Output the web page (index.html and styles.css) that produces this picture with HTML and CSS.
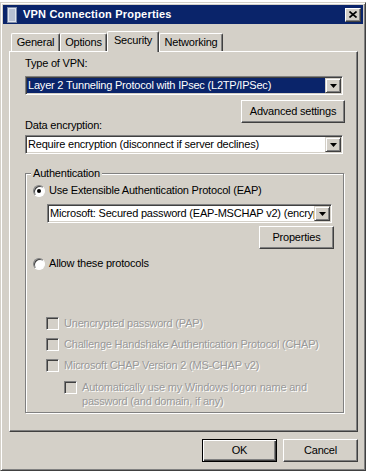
FILE: index.html
```html
<!DOCTYPE html>
<html lang="en">
<head>
  <meta charset="UTF-8">
  <title>VPN Connection Properties</title>
  <link rel="stylesheet" href="styles.css">
</head>
<body>
  <div class="window">
    <div class="titlebar">
      <svg class="title-icon" width="10" height="16" viewBox="0 0 10 16">
        <rect x="0.5" y="0.5" width="9" height="15" fill="#dfe4ee" stroke="#7c8aa8"/>
        <path d="M2 3h6M2 5h6M2 7h6M2 9h6M2 11h6M2 13h6" stroke="#8e9bb6" stroke-width="1"/>
      </svg>
      <span class="title-text">VPN Connection Properties</span>
      <button class="close-btn">
        <svg width="8" height="7" viewBox="0 0 8 7">
          <path d="M0.5 0.5L7.5 6.5M7.5 0.5L0.5 6.5" stroke="#000" stroke-width="1.6"/>
        </svg>
      </button>
    </div>

    <div class="client">
      <div class="tabs">
        <div class="tab tab-general">General</div>
        <div class="tab tab-options">Options</div>
        <div class="tab tab-security active">Security</div>
        <div class="tab tab-networking">Networking</div>
      </div>

      <div class="panel">
        <div class="label">Type of VPN:</div>
        <div class="combo">
          <span class="combo-value selected">Layer 2 Tunneling Protocol with IPsec (L2TP/IPSec)</span>
          <span class="combo-arrow"><svg width="7" height="4" viewBox="0 0 7 4"><polygon points="0,0 7,0 3.5,4" fill="#000"/></svg></span>
        </div>
        <div class="btn-row btn-row-wide">
          <button class="btn btn-advanced">Advanced settings</button>
        </div>

        <div class="label label-enc">Data encryption:</div>
        <div class="combo combo-enc">
          <span class="combo-value">Require encryption (disconnect if server declines)</span>
          <span class="combo-arrow"><svg width="7" height="4" viewBox="0 0 7 4"><polygon points="0,0 7,0 3.5,4" fill="#000"/></svg></span>
        </div>

        <fieldset class="group">
          <legend>Authentication</legend>
          <div class="option">
            <span class="radio checked"></span>
            <span>Use Extensible Authentication Protocol (EAP)</span>
          </div>
          <div class="combo combo-eap">
            <span class="combo-value">Microsoft: Secured password (EAP-MSCHAP v2) (encryption enabled)</span>
            <span class="combo-arrow"><svg width="7" height="4" viewBox="0 0 7 4"><polygon points="0,0 7,0 3.5,4" fill="#000"/></svg></span>
          </div>
          <div class="btn-row btn-row-props">
            <button class="btn">Properties</button>
          </div>
          <div class="option option-allow">
            <span class="radio"></span>
            <span>Allow these protocols</span>
          </div>

          <div class="protocols">
            <div class="check-row"><span class="check"></span><span>Unencrypted password (PAP)</span></div>
            <div class="check-row"><span class="check"></span><span>Challenge Handshake Authentication Protocol (CHAP)</span></div>
            <div class="check-row"><span class="check"></span><span>Microsoft CHAP Version 2 (MS-CHAP v2)</span></div>
            <div class="check-row check-sub"><span class="check"></span><span>Automatically use my Windows logon name and<br>password (and domain, if any)</span></div>
          </div>
        </fieldset>
      </div>

      <div class="dialog-buttons">
        <button class="btn btn-default">OK</button>
        <button class="btn">Cancel</button>
      </div>
    </div>
  </div>
</body>
</html>
```

FILE: styles.css
```css
html, body {
  margin: 0;
  padding: 0;
  background: #fff;
  font-family: 'Liberation Sans', Arial, sans-serif;
  font-size: 11px;
  line-height: 13px;
  letter-spacing: -0.2px;
  color: #000;
}
.window {
  box-sizing: border-box;
  width: 366px;
  height: 469px;
  margin-top: 2px;
  padding: 2px;
  border: 1px solid;
  border-color: #d4d0c8 #404040 #404040 #d4d0c8;
  box-shadow: inset 1px 1px #fff, inset -1px -1px #808080;
  background: #d4d0c8;
  display: flex;
  flex-direction: column;
}
.titlebar {
  flex: none;
  height: 19px;
  display: flex;
  align-items: center;
  padding: 0 2px 0 4px;
  background: #0a246a;
  color: #fff;
  font-weight: bold;
  letter-spacing: 0.2px;
}
.title-icon {
  flex: none;
  margin-right: 6px;
}
.title-text {
  flex: 1;
}
.close-btn {
  box-sizing: border-box;
  width: 16px;
  height: 14px;
  padding: 0;
  display: flex;
  align-items: center;
  justify-content: center;
  background: #d4d0c8;
  border: 1px solid;
  border-color: #fff #404040 #404040 #fff;
  box-shadow: inset -1px -1px #808080;
}
.client {
  flex: 1;
  display: flex;
  flex-direction: column;
  padding: 7px 5px 6px 6px;
}
.tabs {
  display: flex;
  align-items: flex-end;
  padding-left: 2px;
  margin-bottom: -1px;
}
.tab {
  box-sizing: border-box;
  height: 19px;
  padding-top: 2px;
  text-align: center;
  background: #d4d0c8;
  border: 1px solid;
  border-bottom: none;
  border-color: #fff #404040 #404040 #fff;
  box-shadow: inset -1px 0 #808080;
  border-radius: 2px 2px 0 0;
}
.tab.active {
  height: 21px;
  position: relative;
  z-index: 1;
}
.tab-general { width: 49px; }
.tab-options { width: 47px; }
.tab-security { width: 52px; }
.tab-networking { width: 64px; }
.panel {
  flex: 1;
  box-sizing: border-box;
  display: flex;
  flex-direction: column;
  padding: 5px 14px 0 15px;
  border: 1px solid;
  border-color: #fff #404040 #404040 #fff;
  box-shadow: inset -1px -1px #808080;
}
.label-enc {
  margin-top: -4px;
}
.combo {
  box-sizing: border-box;
  height: 19px;
  margin-top: 6px;
  padding: 1px;
  display: flex;
  background: #fff;
  border: 1px solid;
  border-color: #808080 #fff #fff #808080;
  box-shadow: inset 1px 1px #404040, inset -1px -1px #d4d0c8;
}
.combo-enc {
  margin-top: 3px;
}
.combo-value {
  flex: 1;
  min-width: 0;
  padding-left: 1px;
  line-height: 15px;
  white-space: nowrap;
  overflow: hidden;
}
.combo-value.selected {
  background: #0a246a;
  color: #fff;
}
.combo-arrow {
  flex: none;
  box-sizing: border-box;
  width: 16px;
  height: 15px;
  display: flex;
  align-items: center;
  justify-content: center;
  background: #d4d0c8;
  border: 1px solid;
  border-color: #d4d0c8 #404040 #404040 #d4d0c8;
  box-shadow: inset 1px 1px #fff, inset -1px -1px #808080;
}
.btn-row {
  display: flex;
  justify-content: flex-end;
  margin-top: 5px;
}
.btn-row-wide {
  margin-right: -2px;
}
.btn {
  box-sizing: border-box;
  width: 75px;
  height: 23px;
  padding: 0;
  font: inherit;
  letter-spacing: inherit;
  color: #000;
  background: #d4d0c8;
  border: 1px solid;
  border-color: #fff #404040 #404040 #fff;
  box-shadow: inset -1px -1px #808080;
}
.btn-advanced {
  width: 104px;
}
.btn-default {
  border-color: #000;
  box-shadow: inset 1px 1px #fff, inset -1px -1px #404040, inset -2px -2px #808080;
}
.group {
  min-width: 0;
  margin: 13px -1px 0 0;
  padding: 4px 9px 4px 7px;
  border: 1px solid #808080;
  box-shadow: inset 1px 1px #fff, 1px 1px #fff;
}
.group legend {
  margin-left: -2px;
  padding: 0 2px;
  line-height: 13px;
  background: #d4d0c8;
}
.option {
  display: flex;
  align-items: center;
}
.option-allow {
  margin-top: 8px;
}
.radio {
  flex: none;
  box-sizing: border-box;
  width: 12px;
  height: 12px;
  margin-right: 4px;
  border-radius: 50%;
  background: #fff;
  border: 1px solid;
  border-color: #808080 #fff #fff #808080;
  box-shadow: inset 1px 1px #404040;
  display: flex;
  align-items: center;
  justify-content: center;
}
.radio.checked::after {
  content: '';
  width: 4px;
  height: 4px;
  border-radius: 50%;
  background: #000;
}
.combo-eap {
  width: 285px;
  margin: 7px 0 0 14px;
}
.btn-row-props {
  margin-top: 3px;
}
.protocols {
  margin-top: 47px;
  color: #999;
  text-shadow: 1px 1px #fff;
}
.check-row {
  display: flex;
  align-items: center;
  margin: 8px 0 0 13px;
}
.check-row:first-child {
  margin-top: 0;
}
.check {
  flex: none;
  box-sizing: border-box;
  width: 13px;
  height: 13px;
  margin-right: 5px;
  background: #d4d0c8;
  border: 1px solid;
  border-color: #808080 #fff #fff #808080;
  box-shadow: inset 1px 1px #404040, inset -1px -1px #d4d0c8;
}
.check-sub {
  align-items: flex-start;
  margin-left: 31px;
  line-height: 14px;
}
.check-sub .check {
  margin-top: 1px;
}
.dialog-buttons {
  display: flex;
  justify-content: flex-end;
  gap: 6px;
  margin-top: 7px;
}
```
